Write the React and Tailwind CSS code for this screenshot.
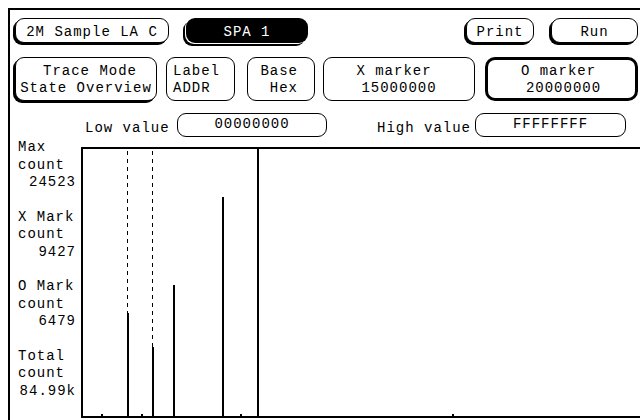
import React from "react";

const btn = "flex items-center justify-center rounded-[9px] border border-black bg-white";
const shadow = "shadow-[-2px_2px_0_0_#000]";

function Chart() {
  return (
    <svg width="559" height="273" viewBox="0 0 559 273" className="block">
      <rect x="0" y="0" width="559" height="2" fill="#000" />
      <rect x="0" y="269" width="559" height="2" fill="#000" />
      <rect x="0" y="0" width="2" height="271" fill="#000" />
      <rect x="176" y="0" width="2" height="271" fill="#000" />
      <line x1="46.5" y1="4" x2="46.5" y2="166" stroke="#000" strokeWidth="1" strokeDasharray="4 4" />
      <line x1="71.5" y1="4" x2="71.5" y2="200" stroke="#000" strokeWidth="1" strokeDasharray="4 4" />
      <rect x="46" y="166" width="2" height="103" fill="#000" />
      <rect x="71" y="200" width="2" height="69" fill="#000" />
      <rect x="92" y="138" width="2" height="131" fill="#000" />
      <rect x="141" y="50" width="2" height="219" fill="#000" />
      <rect x="20" y="267" width="2" height="2" fill="#000" />
      <rect x="60" y="267" width="2" height="2" fill="#000" />
      <rect x="159" y="267" width="2" height="2" fill="#000" />
      <rect x="371" y="267" width="2" height="2" fill="#000" />
    </svg>
  );
}

function Group({ a, b, c }) {
  return (
    <div className="flex flex-col leading-[17.5px]">
      <span>{a}</span>
      <span>{b}</span>
      <span className="text-right">{c}</span>
    </div>
  );
}

export default function App() {
  return (
    <div className="w-[640px] h-[420px] bg-white pt-2 pl-2 overflow-hidden text-black font-['Liberation_Mono',monospace] text-[14px] tracking-[1px] whitespace-pre">
      <div className="h-full border-l-2 border-t-2 border-black flex flex-col">
        {/* Row 1 */}
        <div className="mt-[8px] h-[25px] flex shrink-0">
          <div className={`${btn} ${shadow} ml-[5px] w-[154px] pt-[4px]`}>2M Sample LA C</div>
          <div className="ml-[17px] w-[122px] flex items-center justify-center rounded-[9px] bg-black text-white pt-[3px] shadow-[-1px_1px_0_0_#fff,-3px_3px_0_0_#000]">SPA 1</div>
          <div className={`${btn} ${shadow} ml-[158px] w-[68px] pt-[4px]`}>Print</div>
          <div className={`${btn} ${shadow} ml-[17px] w-[87px] pt-[4px]`}>Run</div>
        </div>
        {/* Row 2 */}
        <div className="mt-[14px] h-[44px] flex shrink-0 leading-[17px]">
          <div className={`${btn} ${shadow} ml-[5px] w-[142px] flex-col pt-[2px]`}>
            <span className="pl-[8px]">Trace Mode</span>
            <span>State Overview</span>
          </div>
          <div className={`${btn} ml-[9px] w-[69px] flex-col items-start pl-[6px] pt-[2px]`}>
            <span>Label</span>
            <span>ADDR</span>
          </div>
          <div className={`${btn} ml-[12px] w-[68px] flex-col items-end pr-[16px] pt-[2px]`}>
            <span>Base</span>
            <span>Hex</span>
          </div>
          <div className={`${btn} ml-[8px] w-[152px] flex-col pt-[2px]`}>
            <span className="pr-[10px]">X marker</span>
            <span>15000000</span>
          </div>
          <div className="ml-[10px] w-[153px] flex flex-col items-center justify-center rounded-[10px] border-[3px] border-black bg-white pt-[2px]">
            <span className="pr-[6px]">O marker</span>
            <span className="pl-[4px]">20000000</span>
          </div>
        </div>
        {/* Row 3 */}
        <div className="mt-[12px] h-[24px] flex shrink-0 items-center">
          <span className="ml-[75px] w-[92px] pt-[6px]">Low value</span>
          <div className={`${btn} w-[150px] h-[24px] pb-[2px]`}>00000000</div>
          <span className="ml-[50px] w-[98px] pt-[6px]">High value</span>
          <div className={`${btn} w-[151px] h-[24px] pb-[2px]`}>FFFFFFFF</div>
        </div>
        {/* Chart row */}
        <div className="mt-[1px] flex flex-1 min-h-0">
          <div className="w-[71px] pl-[8px] pr-[5px] pt-[1px] flex flex-col gap-[17px] shrink-0">
            <Group a="Max" b="count" c="24523" />
            <Group a="X Mark" b="count" c="9427" />
            <Group a="O Mark" b="count" c="6479" />
            <Group a="Total" b="count" c="84.99k" />
          </div>
          <div className="mt-[9px] flex-1">
            <Chart />
          </div>
        </div>
      </div>
    </div>
  );
}
